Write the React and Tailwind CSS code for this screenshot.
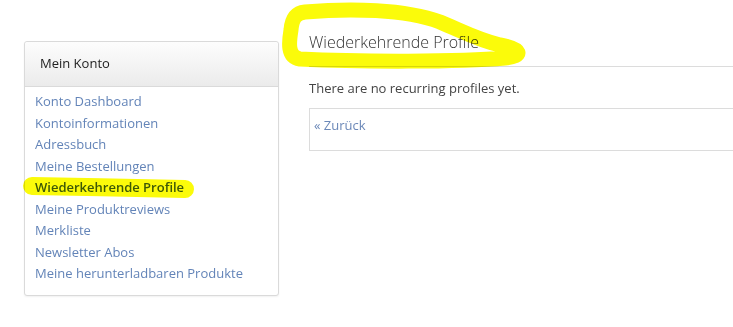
import React from "react";

const links = [
  "Konto Dashboard",
  "Kontoinformationen",
  "Adressbuch",
  "Meine Bestellungen",
  "Wiederkehrende Profile",
  "Meine Produktreviews",
  "Merkliste",
  "Newsletter Abos",
  "Meine herunterladbaren Produkte",
];

const Marker = () => (
  <svg
    className="absolute inset-0 pointer-events-none mix-blend-multiply"
    width="733"
    height="327"
    viewBox="0 0 733 327"
  >
    {/* loop around the page title */}
    <path
      d="M305 12 C350 8, 405 9, 440 22 C462 31, 478 40, 500 45 C522 49, 524 56, 505 58 C460 62, 360 62, 300 59 C287 57, 289 42, 291 30 C292 18, 296 13, 305 12"
      fill="none"
      stroke="#fbfb0a"
      strokeWidth="15"
      strokeLinecap="round"
      strokeLinejoin="round"
    />
    {/* highlight on the active menu entry */}
    <path
      d="M32 186 C80 187, 140 188, 185 189"
      fill="none"
      stroke="#fbfb0a"
      strokeWidth="18"
      strokeLinecap="round"
    />
  </svg>
);

const App = () => {
  return (
    <div
      className="relative w-[733px] h-[327px] overflow-hidden bg-white"
      style={{ fontFamily: '"Open Sans", "Noto Sans", sans-serif' }}
    >
      <div className="flex items-start gap-[30px] pl-[24px] w-[900px]">
        <aside className="mt-[41px] w-[255px] border border-[#dadada] rounded-[3px] shadow-[0_1px_2px_rgba(0,0,0,0.06)] bg-white">
          <div className="h-[45px] flex items-center px-[15px] border-b border-[#dadada] bg-gradient-to-b from-[#fdfdfd] to-[#ebebeb] rounded-t-[3px]">
            <span className="text-[13px] text-[#222]">Mein Konto</span>
          </div>
          <ul className="px-[10px] pt-[4px] pb-[10px]">
            {links.map((l) => (
              <li
                key={l}
                className={
                  l === "Wiederkehrende Profile"
                    ? "text-[13px] leading-[21.5px] font-semibold text-[#3e5a8a]"
                    : "text-[13px] leading-[21.5px] text-[#6384b8]"
                }
              >
                {l}
              </li>
            ))}
          </ul>
        </aside>

        <main className="mt-[29px] flex-1">
          <h1 className="text-[16px] leading-[26px] pb-[11px] font-light text-[#333] border-b border-[#dcdcdc]">
            Wiederkehrende Profile
          </h1>
          <p className="mt-[12px] mb-[11px] text-[13px] leading-[18px] text-[#444]">
            There are no recurring profiles yet.
          </p>
          <div className="h-[43px] border border-[#dcdcdc] pt-[3px] px-[4px]">
            <a className="text-[13px] leading-[18px] text-[#6b88b8]">« Zurück</a>
          </div>
        </main>
      </div>
      <Marker />
    </div>
  );
};

export default App;
